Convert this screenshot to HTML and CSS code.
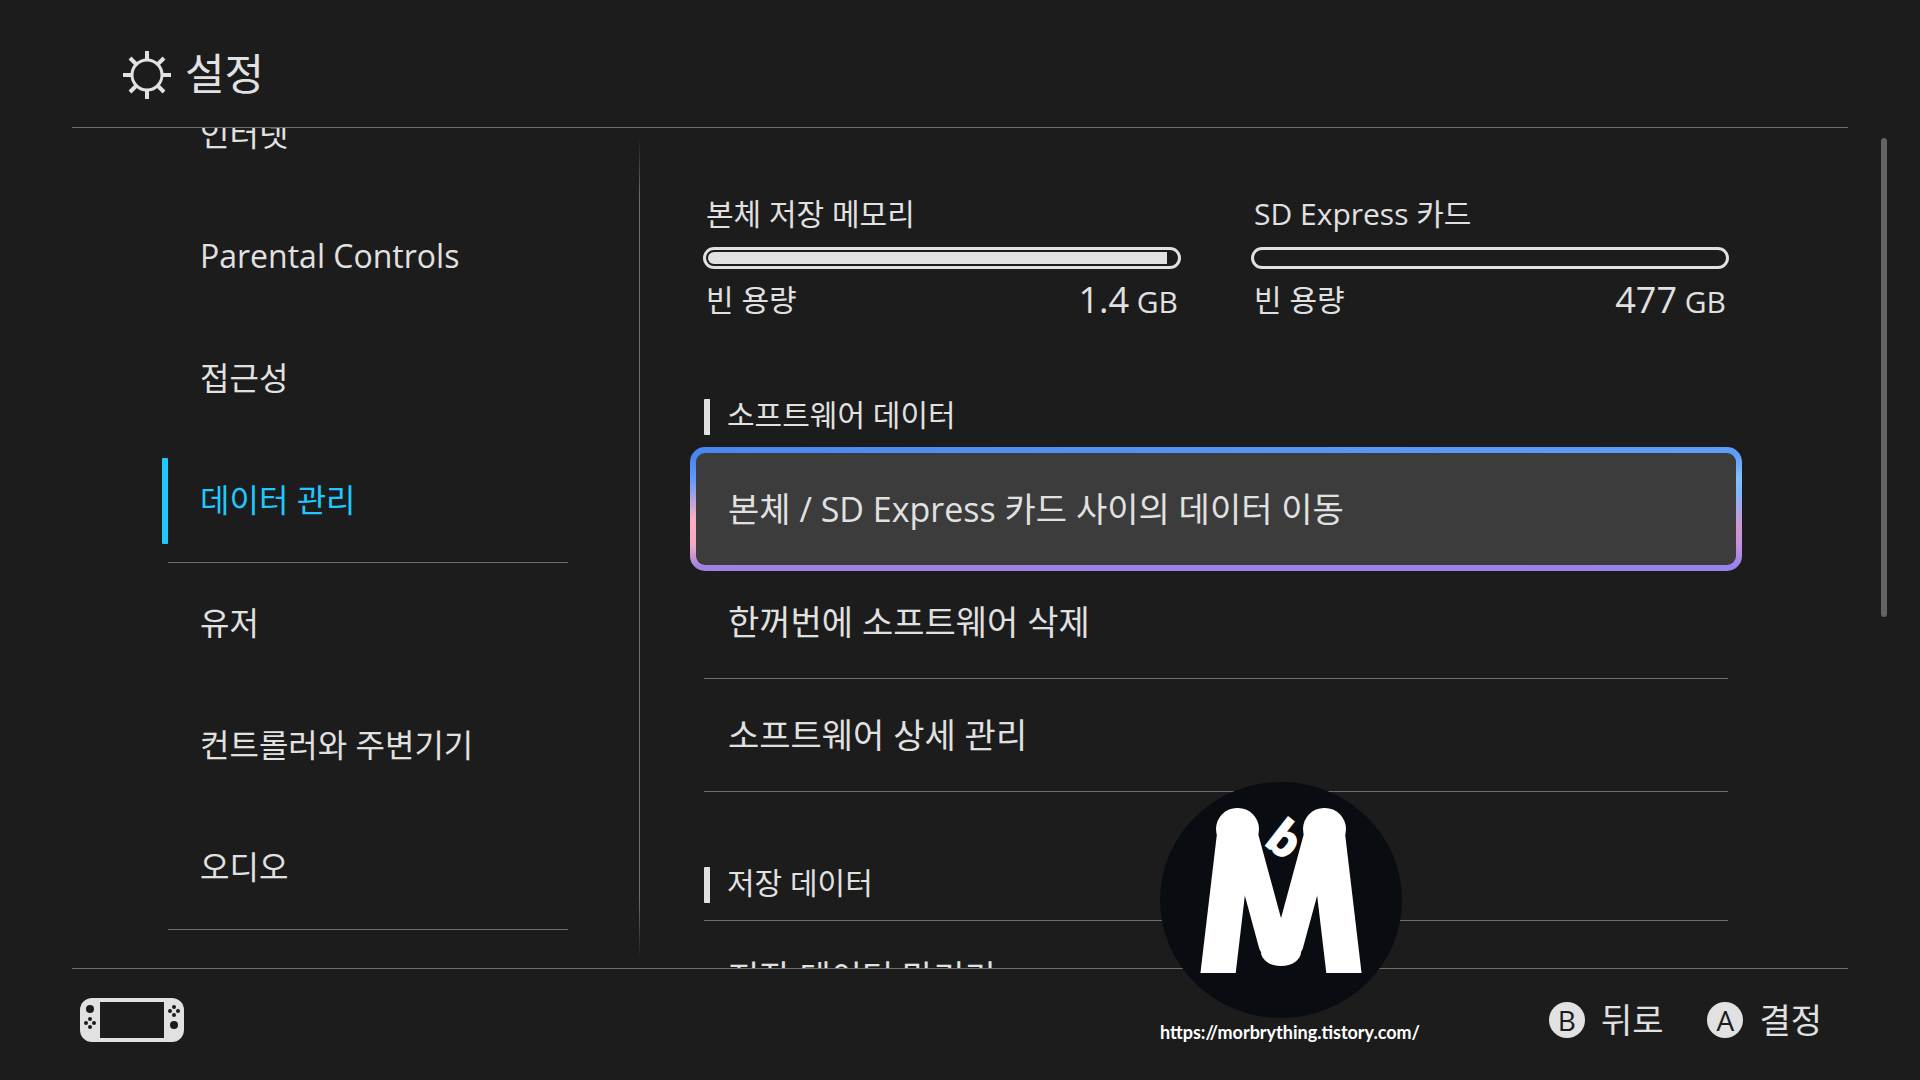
FILE: index.html
```html
<!DOCTYPE html>
<html lang="ko">

<head>
    <meta charset="UTF-8">
    <meta name="viewport" content="width=device-width, initial-scale=1.0">
    <title>설정</title>
    <link rel="stylesheet" href="styles.css">
</head>

<body>
    <header class="header">
        <svg class="gear" viewBox="0 0 48 48" fill="none" stroke="currentColor" stroke-width="4">
            <circle cx="24" cy="24" r="15" stroke-width="3" />
            <path d="M24 0v9M24 39v9M0 24h9M39 24h9M7 7l7 7M34 34l7 7M7 41l7-7M34 14l7-7" />
        </svg>
        <h1>설정</h1>
    </header>

    <main class="main">
        <nav class="sidebar">
            <ul>
                <li><a href="#">인터넷</a></li>
                <li><a href="#">Parental Controls</a></li>
                <li><a href="#">접근성</a></li>
                <li class="group-end"><a href="#" class="active">데이터 관리</a></li>
                <li><a href="#">유저</a></li>
                <li><a href="#">컨트롤러와 주변기기</a></li>
                <li class="group-end"><a href="#">오디오</a></li>
            </ul>
        </nav>

        <section class="content">
            <div class="storage">
                <div class="drive">
                    <div class="drive-name">본체 저장 메모리</div>
                    <div class="bar"><div class="bar-fill" style="width: 98%"></div></div>
                    <div class="drive-free">
                        <span>빈 용량</span>
                        <span><span class="amount">1.4</span> GB</span>
                    </div>
                </div>
                <div class="drive">
                    <div class="drive-name">SD Express 카드</div>
                    <div class="bar"></div>
                    <div class="drive-free">
                        <span>빈 용량</span>
                        <span><span class="amount">477</span> GB</span>
                    </div>
                </div>
            </div>

            <h2>소프트웨어 데이터</h2>
            <div class="list">
                <button class="row focused"><span>본체 / SD Express 카드 사이의 데이터 이동</span></button>
                <button class="row"><span>한꺼번에 소프트웨어 삭제</span></button>
                <button class="row"><span>소프트웨어 상세 관리</span></button>
            </div>

            <h2>저장 데이터</h2>
            <div class="list">
                <button class="row"><span>저장 데이터 맡기기</span></button>
            </div>
        </section>
        <div class="scrollbar"></div>
    </main>

    <footer class="footer">
        <svg class="console" viewBox="0 0 104 44">
            <rect width="104" height="44" rx="12" fill="#e1e1e1" />
            <g fill="#1c1c1c">
                <rect x="20" y="4" width="64" height="36" />
                <circle cx="10" cy="11" r="4" />
                <circle cx="10" cy="21" r="2" />
                <circle cx="6" cy="25" r="2" />
                <circle cx="14" cy="25" r="2" />
                <circle cx="10" cy="29" r="2" />
                <circle cx="94" cy="9" r="2" />
                <circle cx="90" cy="13" r="2" />
                <circle cx="98" cy="13" r="2" />
                <circle cx="94" cy="17" r="2" />
                <circle cx="94" cy="27" r="4" />
            </g>
        </svg>
        <div class="actions">
            <button class="action"><span class="key">B</span>뒤로</button>
            <button class="action"><span class="key">A</span>결정</button>
        </div>
    </footer>

    <div class="watermark">
        <svg viewBox="0 0 242 237">
            <defs>
                <clipPath id="feet"><rect width="242" height="191" /></clipPath>
                <g id="half" fill="none" stroke="#fff">
                    <rect x="56" y="26" width="43" height="42" rx="21" fill="#fff" stroke="none" />
                    <line x1="75" y1="48" x2="57" y2="200" stroke-width="35" />
                    <line x1="81" y1="44" x2="113" y2="162" stroke-width="29" stroke-linecap="round" />
                </g>
            </defs>
            <ellipse cx="121" cy="118" rx="121" ry="118" fill="#090d11" />
            <g clip-path="url(#feet)">
                <use href="#half" />
                <use href="#half" transform="translate(242 0) scale(-1 1)" />
                <ellipse cx="121" cy="170" rx="20" ry="14" fill="#fff" />
            </g>
            <text class="mark" transform="translate(104 62) rotate(38)">b</text>
        </svg>
        <a href="https://morbrything.tistory.com/">https://morbrything.tistory.com/</a>
    </div>
</body>

</html>
```
FILE: styles.css
```css
* {
    box-sizing: border-box;
}

body {
    display: flex;
    flex-direction: column;
    height: 100vh;
    margin: 0;
    overflow: hidden;
    background-color: #1c1c1c;
    color: #e1e1e1;
    font-family: "Open Sans", "Noto Sans CJK KR", sans-serif;
    font-size: 32px;
}

h1,
h2,
ul {
    margin: 0;
    padding: 0;
    font-weight: 400;
}

a {
    color: inherit;
    text-decoration: none;
}

button {
    padding: 0;
    border: none;
    background: none;
    color: inherit;
    font: inherit;
    cursor: pointer;
}

.header {
    display: flex;
    gap: 14px;
    height: 128px;
    margin: 0 72px;
    padding: 51px 51px 0;
    border-bottom: 1px solid #6e6e6e;
}

.header h1 {
    font-size: 43px;
    line-height: 46px;
}

.gear {
    width: 48px;
    height: 48px;
}

.main {
    position: relative;
    display: flex;
    flex: 1;
    min-height: 0;
    overflow: hidden;
}

.sidebar {
    position: relative;
    width: 640px;
    padding: 0 72px 0 168px;
}

.sidebar::after {
    content: "";
    position: absolute;
    top: 10px;
    right: 0;
    bottom: 10px;
    width: 1px;
    background: linear-gradient(transparent, #6e6e6e 60px, #6e6e6e calc(100% - 60px), transparent);
}

/* the list is scrolled down, so its first item is cut by the header */
.sidebar ul {
    margin-top: -54px;
    list-style: none;
}

.sidebar .group-end {
    border-bottom: 1px solid #6e6e6e;
}

.sidebar a {
    position: relative;
    display: block;
    height: 122px;
    padding-left: 32px;
    line-height: 120px;
}

.sidebar .active {
    color: #20c8ff;
}

.sidebar .active::before {
    content: "";
    position: absolute;
    top: 18px;
    left: -6px;
    width: 6px;
    height: 86px;
    border-radius: 1px;
    background-color: #20c8ff;
}

.content {
    flex: 1;
    padding: 65px 192px 0 64px;
}

.storage {
    display: flex;
    gap: 70px;
    margin: 0 -1px 80px;
    font-size: 30px;
    line-height: 42px;
}

.drive {
    flex: 1;
}

.drive-name {
    height: 40px;
    padding-left: 3px;
}

.bar {
    height: 22px;
    margin: 14px 0 10px;
    padding: 2px;
    border: 3px solid #e1e1e1;
    border-radius: 11px;
}

.bar-fill {
    height: 12px;
    border-radius: 6px 0 0 6px;
    background-color: #e1e1e1;
}

.drive-free {
    display: flex;
    justify-content: space-between;
    height: 40px;
    padding: 0 3px;
}

.amount {
    font-size: 36px;
}

.content h2 {
    height: 36px;
    margin-bottom: 17px;
    padding-left: 17px;
    border-left: 6px solid #e1e1e1;
    border-radius: 1px;
    font-size: 30px;
    line-height: 32px;
}

.list {
    margin-bottom: 75px;
    border-top: 1px solid #6e6e6e;
}

.row {
    position: relative;
    display: block;
    width: 100%;
    height: 113px;
    padding: 0 0 4px 24px;
    border-bottom: 1px solid #6e6e6e;
    font-size: 34px;
    text-align: left;
}

.row span {
    position: relative;
}

.focused::before {
    content: "";
    position: absolute;
    inset: -6px -14px;
    border: 6px solid transparent;
    border-radius: 15px;
    background:
        linear-gradient(#3c3c3c, #3c3c3c) padding-box,
        linear-gradient(90deg, #4a88f0, #609dfa) top / 1024px 6px no-repeat border-box,
        linear-gradient(90deg, #a081e4, #9783ea) bottom / 1024px 6px no-repeat border-box,
        linear-gradient(#4a88f0 10%, #5a98ff 24%, #fbb0c0 58%, #f0a6c6 80%, #a081e4 97%) left / 14px 100% no-repeat border-box,
        linear-gradient(#609dfa 6%, #85beff 25%, #7fb8ff 36%, #cf98d4 62%, #c592dc 78%, #9783ea 97%) right / 14px 100% no-repeat border-box;
}

.scrollbar {
    position: absolute;
    top: 10px;
    right: 33px;
    width: 6px;
    height: 57%;
    border-radius: 3px;
    background-color: #646464;
}

.footer {
    display: flex;
    align-items: center;
    justify-content: space-between;
    height: 112px;
    margin: 0 72px;
    padding: 0 26px 9px 8px;
    border-top: 1px solid #6e6e6e;
}

.console {
    width: 104px;
    height: 44px;
}

.actions {
    display: flex;
    gap: 44px;
}

.action {
    display: flex;
    align-items: center;
    gap: 16px;
    font-size: 34px;
    line-height: 44px;
}

.key {
    width: 36px;
    height: 36px;
    border-radius: 50%;
    background-color: #e1e1e1;
    color: #1c1c1c;
    font-size: 28px;
    line-height: 36px;
}

.watermark {
    position: absolute;
    right: 506px;
    bottom: 35px;
    width: 254px;
    color: #fff;
    font-family: Lato, sans-serif;
    font-size: 18px;
    font-weight: 700;
    line-height: 26px;
}

.watermark svg {
    display: block;
    width: 242px;
    height: 237px;
}

.mark {
    fill: #fff;
    stroke: #fff;
    stroke-width: 2px;
    font-size: 48px;
    font-weight: 900;
}
```
